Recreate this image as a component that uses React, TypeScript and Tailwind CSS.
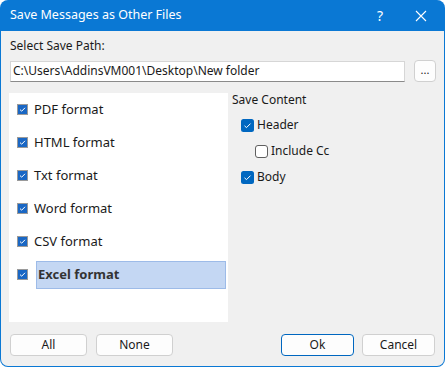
import { useState } from "react";

const formats = ["PDF format", "HTML format", "Txt format", "Word format", "CSV format", "Excel format"];

function SquareCheck() {
  return (
    <svg width="11" height="11" viewBox="0 0 11 11" className="shrink-0">
      <rect x="0.5" y="0.5" width="10" height="10" fill="#1a67c4" stroke="#9a9a9a" />
      <path d="M3 5.6 L4.7 7.2 L8 3.8" fill="none" stroke="#ffffff" strokeWidth="1" />
    </svg>
  );
}

function RoundCheck({ checked }: { checked: boolean }) {
  return checked ? (
    <svg width="13" height="13" viewBox="0 0 13 13" className="shrink-0">
      <rect x="0" y="0" width="13" height="13" rx="2.5" fill="#0067c0" />
      <path d="M3.5 6.8 L5.5 8.6 L9.5 4.6" fill="none" stroke="#ffffff" strokeWidth="1" />
    </svg>
  ) : (
    <svg width="13" height="13" viewBox="0 0 13 13" className="shrink-0">
      <rect x="0.5" y="0.5" width="12" height="12" rx="2.5" fill="#ffffff" stroke="#5f5f5f" />
    </svg>
  );
}

export default function App() {
  const [path] = useState("C:\\Users\\AddinsVM001\\Desktop\\New folder");

  return (
    <div className="w-[445px] h-[367px] bg-[#0a78d4] rounded-lg overflow-hidden flex flex-col font-['Noto_Sans','Liberation_Sans',sans-serif] text-[12px] text-[#1a1a1a]">
      {/* Title bar */}
      <div className="h-[31px] shrink-0 flex items-center text-white">
        <span className="pl-[10px] text-[12.5px] flex-1">Save Messages as Other Files</span>
        <span className="w-[20px] text-center text-[14px] mr-[25px]">?</span>
        <svg width="12" height="12" viewBox="0 0 12 12" className="mr-[18px]">
          <path d="M1 1 L11 11 M11 1 L1 11" stroke="#ffffff" strokeWidth="1.1" />
        </svg>
      </div>

      {/* Body */}
      <div className="flex-1 mx-px mb-px rounded-b-[7px] bg-[#f0f0f0] px-[8px] pt-[7px] flex flex-col">
        <div className="h-4 leading-4 pl-px">Select Save Path:</div>

        <div className="mt-[6px] h-[22px] flex items-center">
          <div className="ml-px w-[395px] h-[21px] bg-white border border-[#d6d6d6] border-b-[#8a8a8a] flex items-center pl-[2px] text-[12px] leading-none">
            {path}
          </div>
          <button className="ml-[9px] w-[22px] h-[22px] rounded-[4px] border border-[#d0d0d0] bg-[#fdfdfd] text-[11px] leading-none pb-[4px]">
            ...
          </button>
        </div>

        <div className="mt-[11px] h-[229px] flex">
          {/* Format list */}
          <div className="w-[219px] bg-white flex flex-col">
            {formats.map((f, i) =>
              i === formats.length - 1 ? (
                <div key={f} className="h-[33px] flex items-center pl-[8px]">
                  <SquareCheck />
                  <div className="ml-[8px] w-[190px] h-[28px] bg-[#c4d7f3] border border-[#9dbbe8] flex items-center pl-px font-bold text-[13px] text-[#333]">
                    {f}
                  </div>
                </div>
              ) : (
                <div key={f} className="h-[33px] flex items-center pl-[8px]">
                  <SquareCheck />
                  <span className="ml-[6px] text-[13px]">{f}</span>
                </div>
              )
            )}
          </div>

          {/* Save content */}
          <div className="ml-[4px] flex flex-col">
            <div className="mt-[-1px] h-[16px] leading-4">Save Content</div>
            <div className="mt-[4px] h-[26px] flex items-center pl-[9px] gap-[3px]">
              <RoundCheck checked />
              <span>Header</span>
            </div>
            <div className="h-[26px] flex items-center pl-[23px] gap-[3px]">
              <RoundCheck checked={false} />
              <span>Include Cc</span>
            </div>
            <div className="h-[26px] flex items-center pl-[9px] gap-[3px]">
              <RoundCheck checked />
              <span>Body</span>
            </div>
          </div>
        </div>

        {/* Buttons */}
        <div className="mt-[12px] h-[22px] flex">
          <button className="ml-px w-[77px] h-[22px] rounded-[4px] border border-[#d0d0d0] bg-[#fdfdfd]">All</button>
          <button className="ml-[9px] w-[77px] h-[22px] rounded-[4px] border border-[#d0d0d0] bg-[#fdfdfd]">None</button>
          <button className="ml-auto w-[73px] h-[22px] rounded-[4px] border border-[#0067c0] bg-[#fdfdfd]">Ok</button>
          <button className="ml-[8px] mr-[1px] w-[73px] h-[22px] rounded-[4px] border border-[#d0d0d0] bg-[#fdfdfd]">Cancel</button>
        </div>
      </div>
    </div>
  );
}
